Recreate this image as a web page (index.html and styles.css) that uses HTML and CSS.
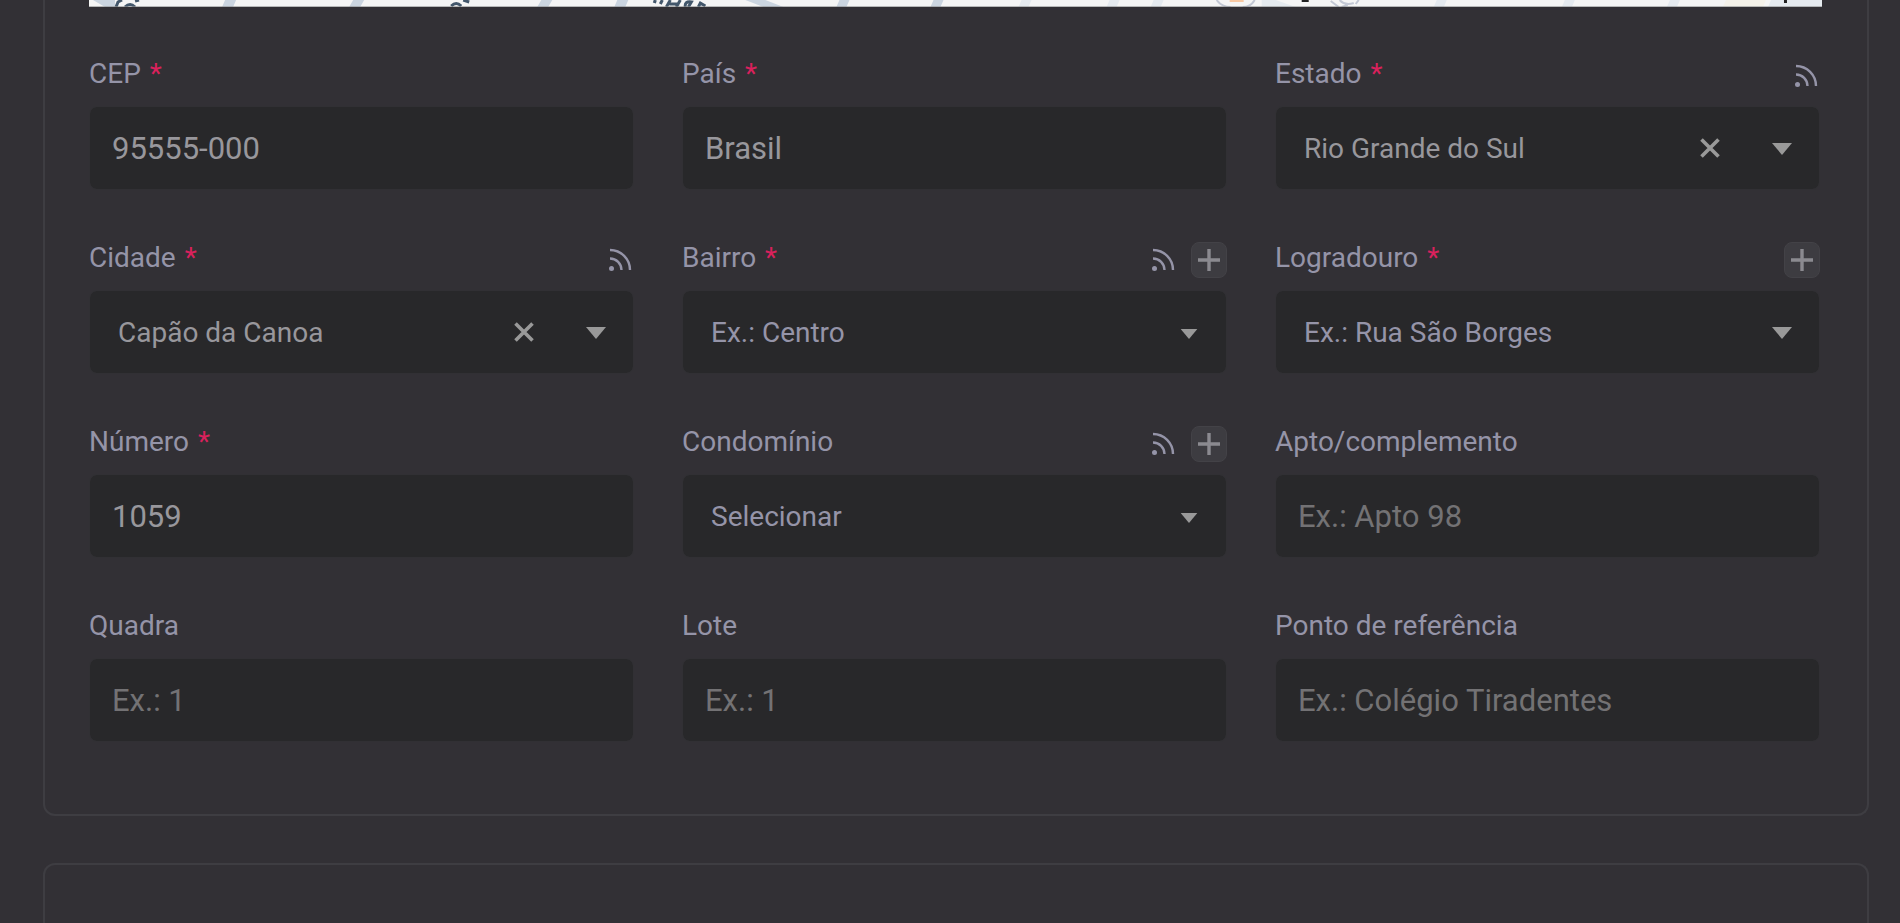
FILE: index.html
```
<!DOCTYPE html>
<html lang="pt-BR">
<head>
    <meta charset="UTF-8">
    <meta name="viewport" content="width=device-width, initial-scale=1.0">
    <title>Endereço</title>
    <link rel="stylesheet" href="styles.css">
</head>
<body>
    <!-- Shared icons -->
    <svg class="sprite" aria-hidden="true">
        <symbol id="icon-rss" viewBox="0 0 24 24">
            <circle cx="3.5" cy="20.5" r="2.5" fill="currentColor"/>
            <path d="M2 10.5A11.5 11.5 0 0 1 13.5 22M2 2A20 20 0 0 1 22 22" fill="none" stroke="currentColor" stroke-width="2.4"/>
        </symbol>
        <symbol id="icon-plus" viewBox="0 0 22 22">
            <path d="M11 0v22M0 11h22" fill="none" stroke="currentColor" stroke-width="3.4"/>
        </symbol>
        <symbol id="icon-clear" viewBox="0 0 20 20">
            <path d="M1.5 1.5l17 17M18.5 1.5l-17 17" fill="none" stroke="currentColor" stroke-width="3.6"/>
        </symbol>
        <symbol id="icon-caret" viewBox="0 0 20 12">
            <path d="M0 0h20L10 12z" fill="currentColor"/>
        </symbol>
    </svg>

    <main>
        <section class="panel panel-address">
            <svg class="map" viewBox="0 0 1732 7" preserveAspectRatio="none" aria-hidden="true">
                <rect width="1732" height="7" fill="#f5f5f5"/>
                <path d="M4 0h22v7h-10zM136 0h11l-3 7h-11zM264 0h11l-4 7h-11zM452 0h11l-4 7h-11zM528 0h11l-3 7h-11zM656 0h20l18 7h-20zM750 0h10l-3 7h-10zM844 0h10l-3 7h-10z" fill="#cbd5e0"/>
                <path d="M932 0h10l-3 7h-10zM1020 0h10l-3 7h-10zM1064 0h10l-3 7h-10zM1172 0h14l20 7h-34zM1347 0h10l-3 7h-10zM1475 0h10l-3 7h-10zM1580 0h10l-3 7h-10zM1681 0h51v7h-54z" fill="#e5eaef"/>
                <path d="M1636 0h40l-3 7h-40z" fill="#f5f2ea"/>
                <path d="M27 7l2-5 4-2M36 7q5-5 10 0M46 1l4-1M362 6q5-5 10 0M374 0l6 2M564 1l3 1M573 0l-2 4M581 0l-4 7M591 0l-4 7M580 4h10M596 7q-1-6 6-5l-3 5M609 7l2-4 5 3" stroke="#43576b" stroke-width="3" fill="none"/>
                <path d="M1127 0q5 7 14 7M1165 0q-4 7-12 7M1241 1l8 6M1250 0q5 6 14 3M1252 7l6-2M1266 4l3-4" stroke="#c3c8d4" stroke-width="2" fill="none"/>
                <path d="M1140 0h14v2h-14z" fill="#f8c9a4"/>
                <path d="M1212 0h7v2h-7zM1694 0h3v3h-3z" fill="#222"/>
                <path d="M0 6h1732v1h-1732z" fill="#8e908f" opacity=".6"/>
            </svg>

            <form class="fields">
                <div class="field">
                    <div class="field-head">
                        <label for="cep">CEP <span class="required">*</span></label>
                    </div>
                    <input type="text" id="cep" value="95555-000">
                </div>

                <div class="field">
                    <div class="field-head">
                        <label for="pais">País <span class="required">*</span></label>
                    </div>
                    <input type="text" id="pais" value="Brasil">
                </div>

                <div class="field">
                    <div class="field-head">
                        <label for="estado">Estado <span class="required">*</span></label>
                        <svg class="rss"><use href="#icon-rss"/></svg>
                    </div>
                    <div class="select">
                        <select id="estado" class="filled">
                            <option>Rio Grande do Sul</option>
                        </select>
                        <button type="button" class="clear" aria-label="Limpar"><svg><use href="#icon-clear"/></svg></button>
                        <svg class="caret"><use href="#icon-caret"/></svg>
                    </div>
                </div>

                <div class="field">
                    <div class="field-head">
                        <label for="cidade">Cidade <span class="required">*</span></label>
                        <svg class="rss"><use href="#icon-rss"/></svg>
                    </div>
                    <div class="select">
                        <select id="cidade" class="filled">
                            <option>Capão da Canoa</option>
                        </select>
                        <button type="button" class="clear" aria-label="Limpar"><svg><use href="#icon-clear"/></svg></button>
                        <svg class="caret"><use href="#icon-caret"/></svg>
                    </div>
                </div>

                <div class="field">
                    <div class="field-head">
                        <label for="bairro">Bairro <span class="required">*</span></label>
                        <svg class="rss"><use href="#icon-rss"/></svg>
                        <button type="button" class="add" aria-label="Adicionar"><svg><use href="#icon-plus"/></svg></button>
                    </div>
                    <div class="select">
                        <select id="bairro">
                            <option>Ex.: Centro</option>
                        </select>
                        <svg class="caret caret-small"><use href="#icon-caret"/></svg>
                    </div>
                </div>

                <div class="field">
                    <div class="field-head">
                        <label for="logradouro">Logradouro <span class="required">*</span></label>
                        <button type="button" class="add" aria-label="Adicionar"><svg><use href="#icon-plus"/></svg></button>
                    </div>
                    <div class="select">
                        <select id="logradouro">
                            <option>Ex.: Rua São Borges</option>
                        </select>
                        <svg class="caret"><use href="#icon-caret"/></svg>
                    </div>
                </div>

                <div class="field">
                    <div class="field-head">
                        <label for="numero">Número <span class="required">*</span></label>
                    </div>
                    <input type="text" id="numero" value="1059">
                </div>

                <div class="field">
                    <div class="field-head">
                        <label for="condominio">Condomínio</label>
                        <svg class="rss"><use href="#icon-rss"/></svg>
                        <button type="button" class="add" aria-label="Adicionar"><svg><use href="#icon-plus"/></svg></button>
                    </div>
                    <div class="select">
                        <select id="condominio">
                            <option>Selecionar</option>
                        </select>
                        <svg class="caret caret-small"><use href="#icon-caret"/></svg>
                    </div>
                </div>

                <div class="field">
                    <div class="field-head">
                        <label for="complemento">Apto/complemento</label>
                    </div>
                    <input type="text" id="complemento" placeholder="Ex.: Apto 98">
                </div>

                <div class="field">
                    <div class="field-head">
                        <label for="quadra">Quadra</label>
                    </div>
                    <input type="text" id="quadra" placeholder="Ex.: 1">
                </div>

                <div class="field">
                    <div class="field-head">
                        <label for="lote">Lote</label>
                    </div>
                    <input type="text" id="lote" placeholder="Ex.: 1">
                </div>

                <div class="field">
                    <div class="field-head">
                        <label for="referencia">Ponto de referência</label>
                    </div>
                    <input type="text" id="referencia" placeholder="Ex.: Colégio Tiradentes">
                </div>
            </form>
        </section>

        <section class="panel panel-next"></section>
    </main>
</body>
</html>
```
FILE: styles.css
```
* {
    box-sizing: border-box;
}

body {
    margin: 0;
    font-family: Roboto, "Liberation Sans", sans-serif;
    background: #323035;
    color: #9594a8;
}

.sprite {
    display: none;
}

main {
    display: flex;
    flex-direction: column;
    gap: 47px;
    min-height: 100vh;
    padding: 0 31px 0 43px;
}

/* Panels */
.panel {
    border: 2px solid #3e3d42;
    border-radius: 12px;
}

.panel-address {
    padding: 0 45px 72px 44px;
    border-top: 0;
    border-top-left-radius: 0;
    border-top-right-radius: 0;
}

.panel-next {
    flex: 1;
    border-bottom: 0;
    border-bottom-left-radius: 0;
    border-bottom-right-radius: 0;
}

.map {
    display: block;
    width: 100%;
    height: 7px;
}

/* Form grid */
.fields {
    display: grid;
    grid-template-columns: repeat(3, 1fr);
    gap: 52px 48px;
    margin: 51px 2px 0 0;
}

.field {
    display: flex;
    flex-direction: column;
    gap: 12px;
    min-width: 0;
}

.field-head {
    display: flex;
    align-items: center;
    gap: 16px;
    height: 36px;
}

label {
    flex: 1;
    align-self: flex-start;
    font-size: 28px;
    line-height: 32px;
}

.required {
    margin-left: 2px;
    color: #d9215c;
}

input,
select {
    width: 100%;
    height: 84px;
    margin: 0;
    border: 1px solid #313034;
    border-radius: 8px;
    background: #28282a;
    background-clip: padding-box;
    font-family: inherit;
    outline: none;
}

input {
    padding: 0 22px;
    font-size: 31px;
    color: #98979c;
}

input::placeholder {
    color: #737274;
    opacity: 1;
}

/* Selects */
.select {
    position: relative;
}

select {
    display: block;
    padding: 0 140px 0 28px;
    font-size: 28px;
    color: #9594a8;
    appearance: none;
}

select.filled {
    color: #98979c;
}

.caret {
    position: absolute;
    top: 37px;
    right: 28px;
    width: 20px;
    height: 12px;
    color: #999;
    pointer-events: none;
}

.caret-small {
    top: 39px;
    right: 29px;
    width: 18px;
    height: 10px;
}

.clear {
    position: absolute;
    top: 32px;
    right: 100px;
    padding: 0;
    border: 0;
    background: none;
    color: #999;
    cursor: pointer;
}

.clear svg {
    display: block;
    width: 20px;
    height: 20px;
}

/* Label icons */
.rss {
    width: 24px;
    height: 24px;
    color: #9594a8;
}

.rss:last-child {
    margin-right: 2px;
}

.add {
    display: flex;
    align-items: center;
    justify-content: center;
    width: 36px;
    height: 36px;
    padding: 0;
    border: 1px solid #434247;
    border-radius: 8px;
    background: #3d3c41;
    color: #8b8a90;
    cursor: pointer;
}

.add svg {
    width: 22px;
    height: 22px;
}
```
